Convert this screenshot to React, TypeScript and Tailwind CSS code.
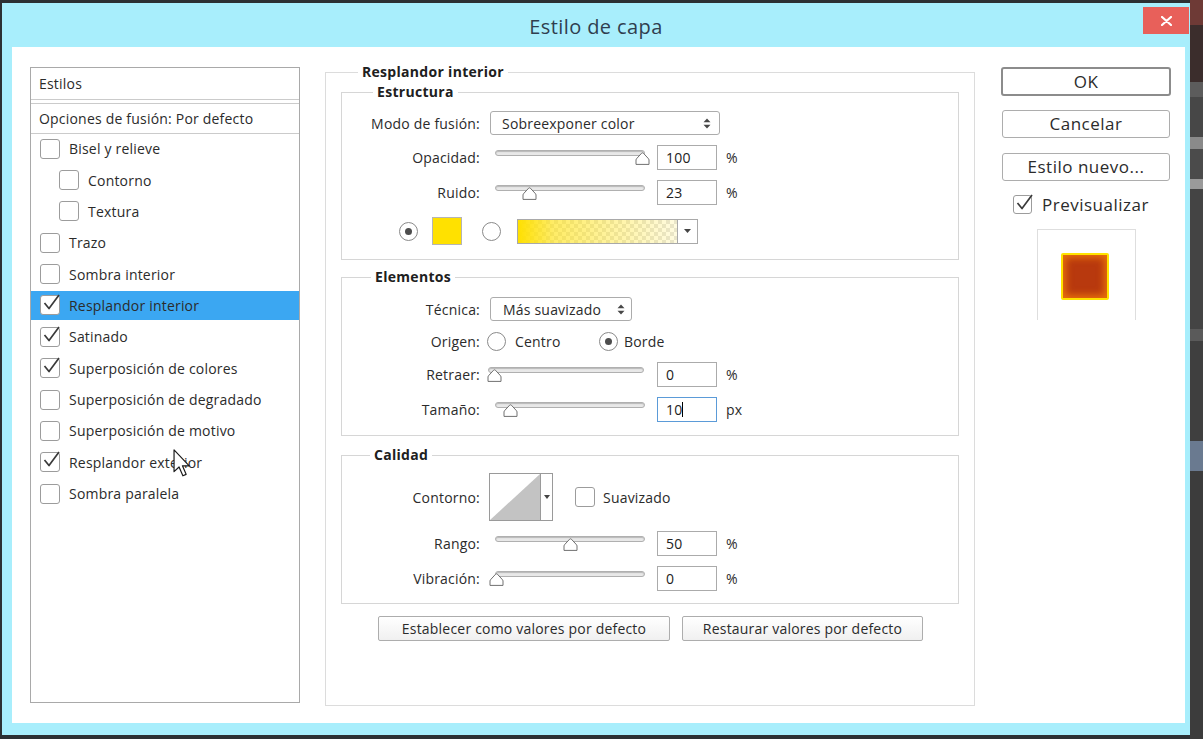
import React from "react";

type Item = { t: string; c: boolean; l: number; sel?: boolean };

const items: Item[] = [
  { t: "Bisel y relieve", c: false, l: 0 },
  { t: "Contorno", c: false, l: 1 },
  { t: "Textura", c: false, l: 1 },
  { t: "Trazo", c: false, l: 0 },
  { t: "Sombra interior", c: false, l: 0 },
  { t: "Resplandor interior", c: true, l: 0, sel: true },
  { t: "Satinado", c: true, l: 0 },
  { t: "Superposición de colores", c: true, l: 0 },
  { t: "Superposición de degradado", c: false, l: 0 },
  { t: "Superposición de motivo", c: false, l: 0 },
  { t: "Resplandor exterior", c: true, l: 0 },
  { t: "Sombra paralela", c: false, l: 0 },
];

function Check({ checked, big = false }: { checked: boolean; big?: boolean }) {
  return (
    <div
      className={`relative shrink-0 rounded-[3px] border border-[#9c9c9c] bg-white ${
        big ? "w-[19px] h-[19px]" : "w-[20px] h-[20px]"
      }`}
    >
      {checked && (
        <svg
          className="absolute left-[1px] top-[-2px] overflow-visible"
          width="18"
          height="18"
          viewBox="0 0 18 18"
        >
          <path
            d="M2.5 9 L7 14.5 L17 1"
            fill="none"
            stroke="#3a3a3a"
            strokeWidth="1.7"
            strokeLinejoin="round"
          />
        </svg>
      )}
    </div>
  );
}

function Radio({ on }: { on: boolean }) {
  return (
    <div className="w-[19px] h-[19px] shrink-0 rounded-full border border-[#8a8a8a] bg-white flex items-center justify-center">
      {on && <div className="w-[7px] h-[7px] rounded-full bg-[#4d4d4d]" />}
    </div>
  );
}

function Slider({ pos, cls }: { pos: number; cls: string }) {
  return (
    <div className={`relative h-[16px] shrink-0 ${cls}`}>
      <div className="h-[6px] rounded-full border border-[#b0b0b0] bg-[#e8e8e8] shadow-[inset_0_1px_1px_#b8b8b8]" />
      <svg
        className="absolute top-[2px]"
        style={{ left: pos - 7 }}
        width="15"
        height="13"
        viewBox="0 0 15 13"
      >
        <path
          d="M1 12.4 V8 Q1 7 2 6.2 L6.6 1.2 Q7.5 0.4 8.4 1.2 L13 6.2 Q14 7 14 8 V12.4 Z"
          fill="#ffffff"
          stroke="#707070"
          strokeWidth="1"
        />
      </svg>
    </div>
  );
}

function Num({ v, focus = false, cls = "ml-[12px]" }: { v: string; focus?: boolean; cls?: string }) {
  return (
    <div
      className={`w-[60px] h-[25px] shrink-0 border bg-white pl-[8px] flex items-center text-[#222] ${cls} ${
        focus ? "border-[#5b9bd8]" : "border-[#ababab]"
      }`}
    >
      {v}
      {focus && <span className="w-px h-[15px] bg-black" />}
    </div>
  );
}

function UpDown() {
  return (
    <svg width="8" height="11" viewBox="0 0 8 11">
      <path d="M4 0.5 L7.5 4.3 H0.5 Z M4 10.5 L7.5 6.7 H0.5 Z" fill="#484848" />
    </svg>
  );
}

function Label({ children }: { children: React.ReactNode }) {
  return <div className="w-[138px] shrink-0 text-right text-[#2b2b2b]">{children}</div>;
}

function Legend({ children, cls }: { children: React.ReactNode; cls: string }) {
  return (
    <legend className={`px-[4px] text-[14px] leading-[18px] font-bold tracking-[0.3px] text-[#202020] ${cls}`}>
      {children}
    </legend>
  );
}

function Unit({ children }: { children: React.ReactNode }) {
  return <span className="ml-[9px] text-[#2b2b2b]">{children}</span>;
}

function LeftPanel() {
  return (
    <div className="mt-[20px] w-[270px] h-[636px] shrink-0 border border-[#a9a9a9] flex flex-col text-[#2b2b2b]">
      <div className="h-[32px] flex items-center pl-[8px] border-b border-[#cbcbcb]">Estilos</div>
      <div className="mt-[3px] h-[31px] flex items-center pl-[8px] border-t border-b border-[#cbcbcb]">
        Opciones de fusión: Por defecto
      </div>
      <div className="mt-[-1px] flex flex-col">
        {items.map((it) => (
          <div key={it.t} className="h-[31.36px] py-[1.5px]">
            <div
              className={`h-full flex items-center ${it.l ? "pl-[28px]" : "pl-[9px]"} ${
                it.sel ? "bg-[#3ba7f2]" : ""
              }`}
            >
              <Check checked={it.c} />
              <span className="ml-[9px]">{it.t}</span>
            </div>
          </div>
        ))}
      </div>
    </div>
  );
}

function MiddlePanel() {
  return (
    <fieldset className="ml-[25px] mt-[16px] w-[650px] h-[643px] shrink-0 border border-[#dcdcdc] text-[#2b2b2b]">
      <Legend cls="ml-[32px]">Resplandor interior</Legend>

      {/* Estructura */}
      <fieldset className="mx-[15px] mt-[2px] border border-[#d6d6d6] pb-[14px]">
        <Legend cls="ml-[31px]">Estructura</Legend>
        <div className="mt-[10px] h-[24px] flex items-center">
          <Label>Modo de fusión:</Label>
          <div className="ml-[10px] w-[230px] h-[24px] border border-[#acacac] rounded-[3px] bg-white flex items-center justify-between pl-[11px] pr-[8px]">
            <span>Sobreexponer color</span>
            <UpDown />
          </div>
        </div>
        <div className="mt-[10px] h-[25px] flex items-center">
          <Label>Opacidad:</Label>
          <Slider pos={147} cls="ml-[15px] w-[150px]" />
          <Num v="100" />
          <Unit>%</Unit>
        </div>
        <div className="mt-[10px] h-[25px] flex items-center">
          <Label>Ruido:</Label>
          <Slider pos={34} cls="ml-[15px] w-[150px]" />
          <Num v="23" />
          <Unit>%</Unit>
        </div>
        <div className="mt-[12px] h-[28px] flex items-center">
          <div className="ml-[57px]">
            <Radio on={true} />
          </div>
          <div className="ml-[14px] w-[30px] h-[28px] border border-[#b5b5b5] bg-[#ffe100]" />
          <div className="ml-[20px]">
            <Radio on={false} />
          </div>
          <div className="ml-[16px] h-[25px] flex border border-[#a9a9a9]">
            <div className="w-[159px] h-full [background-image:linear-gradient(to_right,#ffe000_0%,rgba(255,224,0,0.6)_22%,rgba(255,224,0,0.12)_100%),repeating-conic-gradient(#e6e6e6_0%_25%,#ffffff_0%_50%)] [background-size:100%_100%,8px_8px]" />
            <div className="w-[20px] h-full border-l border-[#a9a9a9] bg-white flex items-center justify-center">
              <svg width="7" height="4" viewBox="0 0 7 4">
                <path d="M0 0 H7 L3.5 4 Z" fill="#444" />
              </svg>
            </div>
          </div>
        </div>
      </fieldset>

      {/* Elementos */}
      <fieldset className="mx-[15px] mt-[8px] border border-[#d6d6d6] pb-[13px]">
        <Legend cls="ml-[29px]">Elementos</Legend>
        <div className="mt-[11px] h-[24px] flex items-center">
          <Label>Técnica:</Label>
          <div className="ml-[10px] w-[142px] h-[24px] border border-[#acacac] rounded-[3px] bg-white flex items-center justify-between pl-[12px] pr-[6px]">
            <span>Más suavizado</span>
            <UpDown />
          </div>
        </div>
        <div className="mt-[8px] h-[24px] flex items-center">
          <Label>Origen:</Label>
          <div className="w-[119px] flex items-center">
            <div className="ml-[7px]">
              <Radio on={false} />
            </div>
            <span className="ml-[9px]">Centro</span>
          </div>
          <Radio on={true} />
          <span className="ml-[6px]">Borde</span>
        </div>
        <div className="mt-[9px] h-[25px] flex items-center">
          <Label>Retraer:</Label>
          <Slider pos={6} cls="ml-[8px] w-[156px]" />
          <Num v="0" cls="ml-[13px]" />
          <Unit>%</Unit>
        </div>
        <div className="mt-[10px] h-[25px] flex items-center">
          <Label>Tamaño:</Label>
          <Slider pos={15} cls="ml-[15px] w-[150px]" />
          <Num v="10" focus />
          <Unit>px</Unit>
        </div>
      </fieldset>

      {/* Calidad */}
      <fieldset className="mx-[15px] mt-[10px] border border-[#d6d6d6] pb-[12px]">
        <Legend cls="ml-[28px]">Calidad</Legend>
        <div className="mt-[9px] h-[48px] flex items-center">
          <Label>Contorno:</Label>
          <div className="ml-[9px] w-[64px] h-[48px] border border-[#9a9a9a] bg-white flex">
            <svg width="50" height="46" viewBox="0 0 50 46">
              <polygon points="0,46 50,0 50,46" fill="#c3c3c3" />
            </svg>
            <div className="flex-1 border-l border-[#9a9a9a] flex items-center justify-center">
              <svg width="6" height="4" viewBox="0 0 6 4">
                <path d="M0 0 H6 L3 4 Z" fill="#444" />
              </svg>
            </div>
          </div>
          <div className="ml-[22px]">
            <Check checked={false} />
          </div>
          <span className="ml-[8px]">Suavizado</span>
        </div>
        <div className="mt-[10px] h-[25px] flex items-center">
          <Label>Rango:</Label>
          <Slider pos={75} cls="ml-[15px] w-[150px]" />
          <Num v="50" />
          <Unit>%</Unit>
        </div>
        <div className="mt-[10px] h-[25px] flex items-center">
          <Label>Vibración:</Label>
          <Slider pos={1} cls="ml-[15px] w-[150px]" />
          <Num v="0" />
          <Unit>%</Unit>
        </div>
      </fieldset>

      <div className="mt-[12px] ml-[52px] flex gap-[12px]">
        <div className="w-[292px] h-[25px] border border-[#adadad] rounded-[2px] bg-gradient-to-b from-[#ffffff] to-[#f0f0f0] flex items-center justify-center">
          Establecer como valores por defecto
        </div>
        <div className="w-[241px] h-[25px] border border-[#adadad] rounded-[2px] bg-gradient-to-b from-[#ffffff] to-[#f0f0f0] flex items-center justify-center">
          Restaurar valores por defecto
        </div>
      </div>
    </fieldset>
  );
}

function RightColumn() {
  return (
    <div className="ml-[26px] mt-[20px] w-[170px] shrink-0 flex flex-col items-start text-[17px] tracking-[0.5px] text-[#2b2b2b]">
      <div className="w-[170px] h-[29px] border-2 border-[#8c8c8c] rounded-[3px] bg-white flex items-center justify-center">
        OK
      </div>
      <div className="ml-[1px] mt-[14px] w-[168px] h-[28px] border border-[#adadad] rounded-[3px] bg-white flex items-center justify-center">
        Cancelar
      </div>
      <div className="ml-[1px] mt-[15px] w-[168px] h-[28px] border border-[#adadad] rounded-[3px] bg-white flex items-center justify-center">
        Estilo nuevo...
      </div>
      <div className="mt-[14px] ml-[12px] flex items-center h-[19px]">
        <Check checked big />
        <span className="ml-[10px]">Previsualizar</span>
      </div>
      <div className="mt-[15px] ml-[36px] w-[99px] h-[91px] border-t border-x border-[#dedede] pt-[23px] pl-[23px]">
        <div className="w-[48px] h-[47px] rounded-[2px] border-2 border-[#ffe300] bg-[#b8390e] shadow-[inset_0_0_7px_3px_#e8700a]" />
      </div>
    </div>
  );
}

export default function App() {
  return (
    <div className="relative w-[1203px] h-[739px] overflow-hidden bg-[#2c3033] flex font-['Open_Sans','Noto_Sans',sans-serif] text-[14px] tracking-[0.2px]">
      <div className="ml-[2px] mt-[3px] w-[1188px] h-[732px] bg-[#a8eefc] relative flex flex-col shrink-0">
        <div className="h-[44px] pt-[3px] flex items-center justify-center text-[20px] tracking-[0.4px] text-[#2f3e4f]">
          Estilo de capa
        </div>
        <div className="absolute top-[4px] right-[1px] w-[46px] h-[27px] bg-[#e8605a] flex items-center justify-center">
          <svg width="11" height="10" viewBox="0 0 11 10">
            <path d="M1 1 L10 9 M10 1 L1 9" stroke="#ffffff" strokeWidth="2.2" strokeLinecap="round" />
          </svg>
        </div>
        <div className="ml-[10px] w-[1173px] h-[676px] bg-white flex items-start pl-[18px]">
          <LeftPanel />
          <MiddlePanel />
          <RightColumn />
        </div>
      </div>
      <div className="flex-1 flex flex-col">
        <div className="h-[25px] bg-[#6e3a36]" />
        <div className="h-[57px] bg-[#3b2d2c]" />
        <div className="h-[15px] bg-[#5c5c5c]" />
        <div className="h-[40px] bg-[#474747]" />
        <div className="h-[12px] bg-[#8a8a8a]" />
        <div className="h-[30px] bg-[#4b4b4b]" />
        <div className="h-[10px] bg-[#9a9a9a]" />
        <div className="h-[140px] bg-[#444444]" />
        <div className="h-[12px] bg-[#5a5a5a]" />
        <div className="h-[100px] bg-[#3f3f3f]" />
        <div className="h-[30px] bg-[#6a7a90]" />
        <div className="flex-1 bg-[#3c3c3c]" />
      </div>
      <svg
        className="absolute left-[173px] top-[449px]"
        width="18"
        height="28"
        viewBox="0 0 12 19"
      >
        <path
          d="M0.6 0.6 V15.4 L4 12.2 L6.6 18.2 L8.8 17.2 L6.3 11.4 H10.9 Z"
          fill="#ffffff"
          stroke="#1a1a1a"
          strokeWidth="0.8"
          strokeLinejoin="round"
        />
      </svg>
    </div>
  );
}
